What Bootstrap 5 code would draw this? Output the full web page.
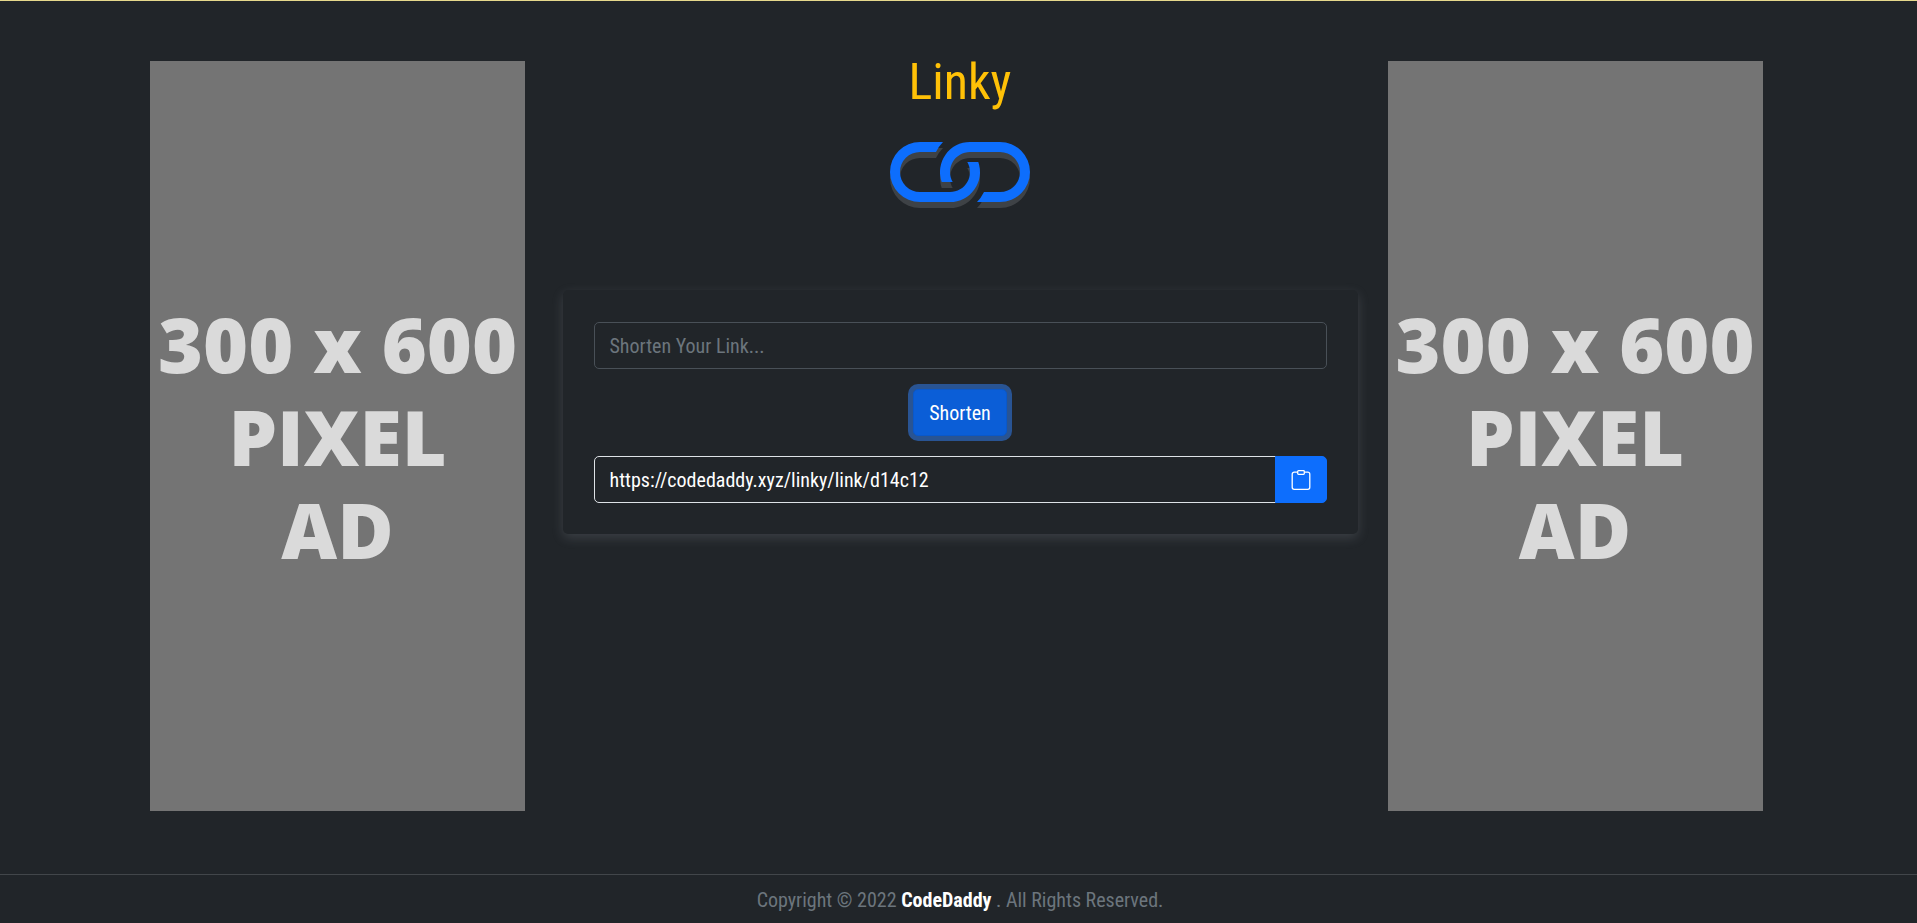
<!DOCTYPE html>
<html lang="en">
<head>
<meta charset="utf-8">
<meta name="viewport" content="width=device-width, initial-scale=1">
<title>Linky</title>
<link href="https://cdn.jsdelivr.net/npm/bootstrap@5.3.0/dist/css/bootstrap.min.css" rel="stylesheet">
<style>
  html { font-size: 20px; }
  body { font-family: "Roboto Condensed", Roboto, sans-serif; background: #212529; border-top: 1px solid #e6d98c; }
  .page-pad { padding-left: 3px; }
  .linky-wrap { max-width: 1650px; }
  .main-area { padding-top: 60px; padding-bottom: 63px; }
  .ad-box { max-width: 375px; height: 750px; background: #747474; color: #dadada; font: 800 77px/93px "Open Sans", sans-serif; }
  .brand-title { font-size: 50px; line-height: 43px; margin-bottom: 38px; }
  .brand-logo { margin-bottom: 82px; }
  .shorten-card { border-radius: 5px; padding: 32px 31px 31px; box-shadow: 0 4px 12px rgba(173, 181, 189, .19); }
  .form-control, .form-control:focus { background: #212529; color: #fff; border-color: #495057; border-radius: 5px; }
  .form-control::placeholder { color: #6c757d; }
  .result-input.form-control { border-color: #dee2e6; }
  .btn { border-radius: 5px; }
  .shorten-btn, .shorten-btn:hover { background: #0b5ed7; border-color: #0a58ca; box-shadow: 0 0 0 5px rgba(49, 132, 253, .5); }
  .site-footer { border-top: 1px solid #42464a; color: #6c757d; padding-top: 10px; padding-bottom: 8px; }
</style>
</head>
<body class="min-vh-100 d-flex flex-column">
<main class="page-pad flex-grow-1">
  <div class="container linky-wrap main-area">
    <div class="row">
      <aside class="col-3">
        <div class="ad-box d-flex align-items-center justify-content-center text-center"><div><div class="text-nowrap">300 x 600</div><div>PIXEL</div><div>AD</div></div></div>
      </aside>
      <div class="col-6 text-center">
        <h1 class="brand-title text-warning fw-normal">Linky</h1>
        <svg class="brand-logo d-block mx-auto" width="140" height="66" viewBox="0 0 140 66" aria-hidden="true">
          <defs>
            <path id="half" d="M53 0H30A30 30 0 0 0 30 60H60A30 30 0 0 0 88.3 20H77.3A20 20 0 0 1 60 50H30A20 20 0 0 1 30 10H46Q49 4 53 0Z"/>
            <g id="chain"><use href="#half"/><use href="#half" transform="rotate(180 70 30)"/></g>
          </defs>
          <use href="#chain" y="6" fill="#3e4246"/>
          <use href="#chain" fill="#0d6efd"/>
        </svg>
        <div class="shorten-card">
          <form class="mb-3" onsubmit="return false">
            <input type="text" class="form-control mb-3" placeholder="Shorten Your Link..." aria-label="Shorten Your Link">
            <button type="submit" class="btn btn-primary shorten-btn">Shorten</button>
          </form>
          <div class="input-group">
            <input type="text" class="form-control result-input" value="https://codedaddy.xyz/linky/link/d14c12" aria-label="Short link" readonly>
            <button type="button" class="btn btn-primary d-flex align-items-center" aria-label="Copy">
              <svg width="20" height="20" viewBox="0 0 20 20" fill="none" stroke="currentColor" stroke-width="1.3" aria-hidden="true">
                <path d="M6.4 2.2H3.2A2 2 0 0 0 1.2 4.2V17.3A2 2 0 0 0 3.2 19.3H16.8A2 2 0 0 0 18.8 17.3V4.2A2 2 0 0 0 16.8 2.2H13.6"/>
                <rect x="6.7" y=".7" width="6.6" height="3.7" rx=".8"/>
              </svg>
            </button>
          </div>
        </div>
      </div>
      <aside class="col-3">
        <div class="ad-box d-flex align-items-center justify-content-center text-center"><div><div class="text-nowrap">300 x 600</div><div>PIXEL</div><div>AD</div></div></div>
      </aside>
    </div>
  </div>
</main>
<footer class="site-footer page-pad text-center">Copyright © 2022 <a href="#" class="text-white fw-bold text-decoration-none">CodeDaddy</a> . All Rights Reserved.</footer>
<script src="https://cdn.jsdelivr.net/npm/bootstrap@5.3.0/dist/js/bootstrap.bundle.min.js"></script>
</body>
</html>
